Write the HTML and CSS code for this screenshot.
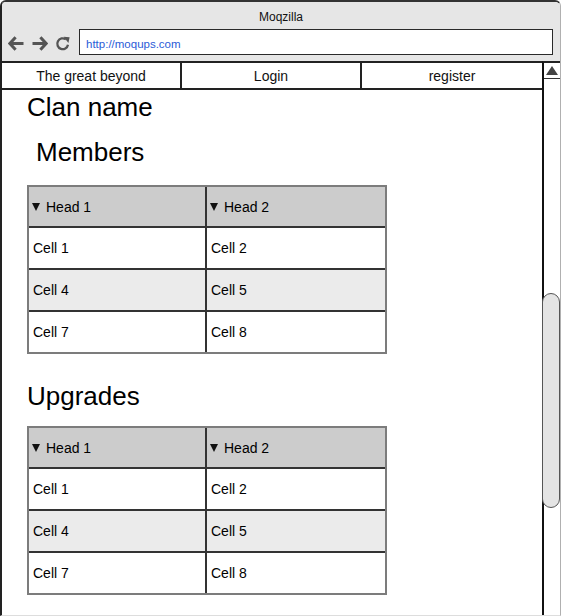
FILE: index.html
```html
<!DOCTYPE html>
<html>
<head>
<meta charset="utf-8">
<title>Moqzilla</title>
<link rel="stylesheet" href="styles.css">
</head>
<body>
<div class="window">
  <div class="titlebar">
    <div class="title">Moqzilla</div>
    <div class="toolbar">
      <div class="icons">
        <svg class="ico" width="16" height="15" viewBox="0 0 16 15"><path d="M7.6 1.2 L1.9 7.5 L7.6 13.8 M2.4 7.5 H15.5" fill="none" stroke="#555" stroke-width="3"/></svg>
        <svg class="ico" width="16" height="15" viewBox="0 0 16 15"><path d="M8.4 1.2 L14.1 7.5 L8.4 13.8 M13.6 7.5 H0.5" fill="none" stroke="#555" stroke-width="3"/></svg>
        <svg class="ico reload" width="16" height="15" viewBox="0 0 16 15"><path d="M13 8.8 A5.4 5.4 0 1 1 10.9 3.4" fill="none" stroke="#555" stroke-width="2.3"/><path d="M8.6 0.8 L14.6 1.3 L13.4 7 Z" fill="#555"/></svg>
      </div>
      <div class="address">http://moqups.com</div>
    </div>
  </div>
  <div class="main">
    <div class="page">
      <div class="nav">
        <div class="navitem">The great beyond</div>
        <div class="navitem">Login</div>
        <div class="navitem">register</div>
      </div>
      <div class="content">
        <h1 class="h-clan">Clan name</h1>
        <h2 class="h-members">Members</h2>
        <div class="tbl">
          <div class="row head"><div class="cell"><span class="tri"></span>Head 1</div><div class="cell"><span class="tri"></span>Head 2</div></div>
          <div class="row"><div class="cell">Cell 1</div><div class="cell">Cell 2</div></div>
          <div class="row alt"><div class="cell">Cell 4</div><div class="cell">Cell 5</div></div>
          <div class="row last"><div class="cell">Cell 7</div><div class="cell">Cell 8</div></div>
        </div>
        <h2 class="h-upgrades">Upgrades</h2>
        <div class="tbl">
          <div class="row head"><div class="cell"><span class="tri"></span>Head 1</div><div class="cell"><span class="tri"></span>Head 2</div></div>
          <div class="row"><div class="cell">Cell 1</div><div class="cell">Cell 2</div></div>
          <div class="row alt"><div class="cell">Cell 4</div><div class="cell">Cell 5</div></div>
          <div class="row last"><div class="cell">Cell 7</div><div class="cell">Cell 8</div></div>
        </div>
      </div>
    </div>
    <div class="scrollbar">
      <div class="up"><span class="up-tri"></span></div>
      <div class="thumb"></div>
    </div>
  </div>
</div>
</body>
</html>
```
FILE: styles.css
```css
html, body {
  margin: 0;
  padding: 0;
  background: #fff;
}
body {
  font-family: "Liberation Sans", Arial, sans-serif;
  color: #000;
}
.window {
  width: 561px;
  height: 616px;
  box-sizing: border-box;
  border-left: 2px solid #222;
  border-top: 2px solid #333;
  border-right: 1px solid #b0b0b0;
  border-bottom: 1px solid #ddd;
  border-radius: 6px 6px 0 0;
  overflow: hidden;
  display: flex;
  flex-direction: column;
}
.titlebar {
  height: 59px;
  background: #e6e6e6;
  flex: none;
}
.title {
  height: 27px;
  line-height: 30px;
  font-size: 12px;
  text-align: center;
  color: #111;
}
.toolbar {
  display: flex;
  align-items: center;
  height: 26px;
}
.icons {
  width: 77px;
  display: flex;
  align-items: center;
  padding-left: 6px;
  padding-top: 2px;
  box-sizing: border-box;
  gap: 8px;
}
.ico { display: block; }
.reload { margin-left: -1px; }
.address {
  width: 474px;
  height: 26px;
  box-sizing: border-box;
  border: 1.5px solid #2a2a2a;
  background: #fff;
  font-size: 11.5px;
  line-height: 25px;
  padding-top: 2px;
  padding-left: 6px;
  color: #2a5bd7;
}
.main {
  flex: 1;
  display: flex;
  min-height: 0;
}
.page {
  width: 540px;
  border-top: 2px solid #222;
  display: flex;
  flex-direction: column;
}
.nav {
  display: grid;
  grid-template-columns: 1fr 1fr 1fr;
  height: 25px;
  border-bottom: 2px solid #222;
}
.navitem {
  font-size: 14px;
  text-align: center;
  line-height: 27px;
  border-right: 2px solid #222;
  color: #111;
}
.navitem:last-child { border-right: none; }
.content {
  padding-left: 25px;
}
h1, h2 {
  font-weight: normal;
  font-size: 26px;
  line-height: 30px;
  margin: 0;
}
.h-clan { margin-top: 2px; padding-left: 0; }
.h-members { margin-top: 15px; padding-left: 9px; }
.h-upgrades { margin-top: 27px; margin-bottom: 15px; }
.tbl {
  width: 360px;
  box-sizing: border-box;
  border: 2px solid #7c7c7c;
  margin-top: 18px;
}
.h-upgrades + .tbl { margin-top: 0; }
.row {
  display: grid;
  grid-template-columns: 178px 1fr;
  height: 42px;
  border-bottom: 2px solid #333;
  box-sizing: border-box;
}
.row.head { background: #cccccc; height: 41px; }
.row.alt { background: #ebebeb; }
.row.last { border-bottom: none; height: 40px; }
.cell {
  display: flex;
  align-items: center;
  font-size: 14px;
  padding-left: 4px;
  white-space: nowrap;
}
.cell:first-child { border-right: 2px solid #333; }
.head .cell { padding-left: 3px; }
.tri {
  display: inline-block;
  width: 0;
  height: 0;
  border-left: 4.5px solid transparent;
  border-right: 4.5px solid transparent;
  border-top: 8px solid #111;
  margin-right: 6px;
  margin-top: 1px;
}
.scrollbar {
  width: 16px;
  border-top: 2px solid #222;
  border-left: 2px solid #111;
  display: flex;
  flex-direction: column;
}
.up {
  height: 15px;
  border-bottom: 1px solid #333;
  display: flex;
  align-items: center;
  justify-content: center;
  flex: none;
}
.up-tri {
  width: 0;
  height: 0;
  border-left: 6px solid transparent;
  border-right: 6px solid transparent;
  border-bottom: 9px solid #444;
}
.thumb {
  margin-top: 214px;
  margin-left: -2px;
  width: 18px;
  height: 215px;
  box-sizing: border-box;
  border: 1px solid #555;
  border-radius: 9px;
  background: #e4e4e4;
  flex: none;
}
```
